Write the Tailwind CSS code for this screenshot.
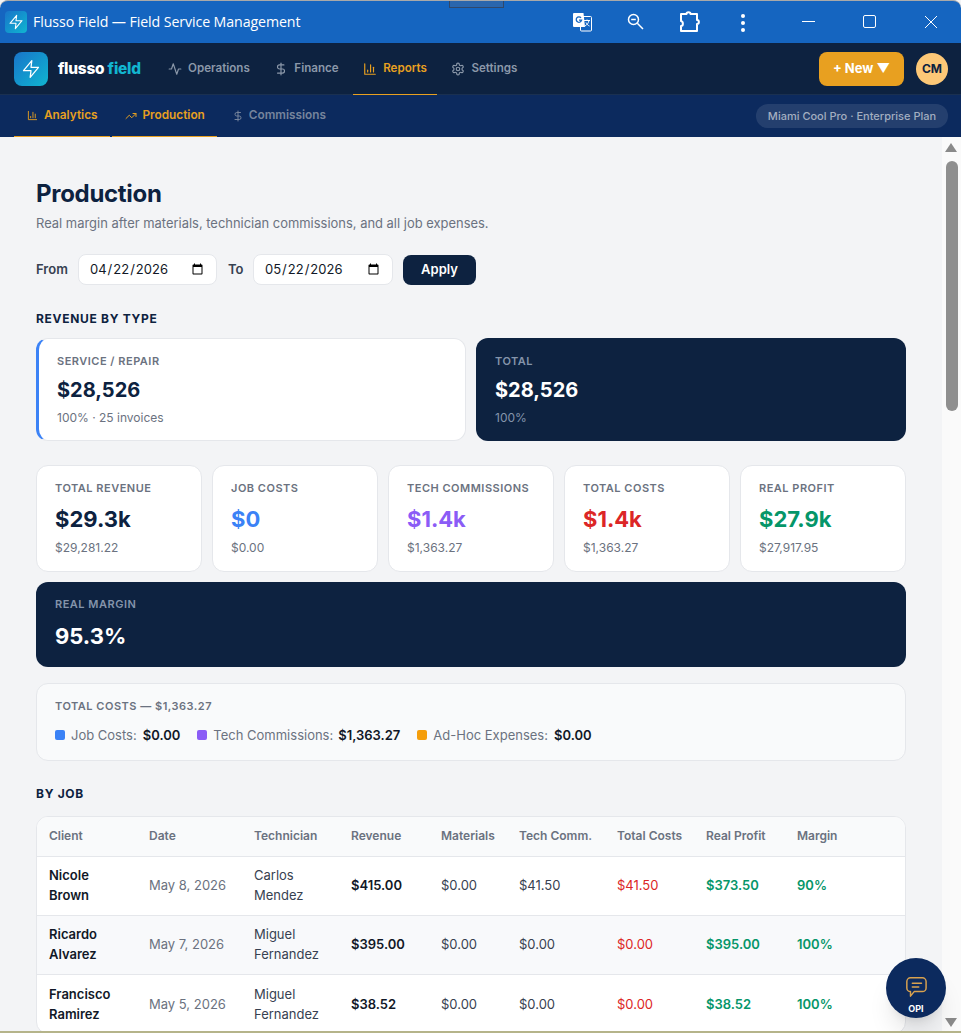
<!DOCTYPE html>
<html lang="en">
<head>
<meta charset="UTF-8">
<title>Flusso Field — Field Service Management</title>
<script src="https://cdn.jsdelivr.net/npm/@tailwindcss/browser@4"></script>
</head>
<body class="bg-[#f3f4f6] font-['Inter',sans-serif] overflow-hidden">
<div class="relative h-[1033px] w-[961px] overflow-hidden flex flex-col">

  <!-- Window title bar -->
  <div class="relative h-[43px] shrink-0 bg-[#1565c0] border-t border-[#a9a9a9] rounded-t-lg flex items-center">
    <div class="absolute left-[449px] top-0 w-[55px] h-[7px] border border-[#30486b] border-t-0 bg-[#2a66ad]"></div>
    <div class="ml-[5px] w-[22px] h-[22px] rounded bg-gradient-to-br from-[#1a74c9] to-[#12b5d0] flex items-center justify-center">
      <svg class="w-[16px] h-[16px]" viewBox="0 0 24 24" fill="none" stroke="#fff" stroke-width="1.6" stroke-linejoin="round"><polygon points="13 2 3 14 12 14 11 22 21 10 12 10 13 2"/></svg>
    </div>
    <span class="ml-[6px] text-white text-[14.2px] font-['Open_Sans',sans-serif] tracking-[-0.1px]">Flusso Field — Field Service Management</span>
    <!-- Browser icons -->
    <svg class="absolute left-[573px] top-[11px] w-[20px] h-[20px]" viewBox="0 0 20 20"><rect x="7.500" y="4.500" width="11" height="14.500" rx="1" fill="#1565c0" stroke="#fff"/><path d="M1 1h9.500l1.500 14H1a1 1 0 0 1-1-1V2a1 1 0 0 1 1-1z" fill="#fff"/><path d="M8 5.800a2.700 2.700 0 1 0 .6 2.400H6" fill="none" stroke="#1565c0" stroke-width="1.300"/><path d="M11 8.500h6M14 7.500v1M16 8.500c-.5 2.500-2 4.500-4 5.500M13 10.500c.7 1.500 2 3 3.500 3.500" fill="none" stroke="#fff" stroke-width="1"/></svg>
    <svg class="absolute left-[627px] top-[12px] w-[17px] h-[17px]" viewBox="0 0 17 17" fill="none" stroke="#fff" stroke-width="1.500"><circle cx="6.500" cy="6.500" r="5"/><path d="M4.200 6.500h4.600M10.300 10.300l5.700 5.700"/></svg>
    <svg class="absolute left-[679px] top-[10px] w-[22px] h-[22px]" viewBox="0 0 22 22" fill="none" stroke="#fff" stroke-width="2" stroke-linejoin="round"><path d="M2 3h5.500c0-2.500 4-2.500 4 0H18v6c2.500 0 2.500 4 0 4v7H2v-5c2.500 0 2.500-4.500 0-5z"/></svg>
    <svg class="absolute left-[739px] top-[12px] w-[8px] h-[20px]" viewBox="0 0 8 20" fill="#fff"><circle cx="4" cy="3" r="2"/><circle cx="4" cy="10" r="2"/><circle cx="4" cy="17" r="2"/></svg>
    <!-- Window controls -->
    <div class="absolute left-[802px] top-[20px] w-[13px] h-px bg-white"></div>
    <div class="absolute left-[863px] top-[14px] w-[13px] h-[13px] border border-white rounded-[2px]"></div>
    <svg class="absolute left-[924px] top-[14px] w-[14px] h-[14px]" viewBox="0 0 14 14" stroke="#fff" stroke-width="1"><path d="M1 1l12 12M13 1L1 13"/></svg>
  </div>

  <!-- Main nav -->
  <div class="h-[52px] shrink-0 bg-[#0d2240] border-b border-[#1a3050] flex items-center pl-[14px] pr-[13px]">
    <div class="w-[34px] h-[34px] rounded-lg bg-gradient-to-br from-[#1a74c9] to-[#12b5d0] flex items-center justify-center">
      <svg class="w-[20px] h-[20px]" viewBox="0 0 24 24" fill="none" stroke="#fff" stroke-width="1.500" stroke-linejoin="round"><polygon points="13 2 3 14 12 14 11 22 21 10 12 10 13 2"/></svg>
    </div>
    <div class="ml-[10px] text-[15.4px] font-extrabold tracking-[-0.2px] text-white w-[100px]">flusso <span class="text-[#12b5d0]">field</span></div>
    <nav class="flex gap-[4.5px] text-[11.6px] font-semibold text-[#8b98a9] h-[51px]">
      <a class="flex items-center gap-[6px] px-[10px]">
        <svg class="w-[14px] h-[14px]" viewBox="0 0 24 24" fill="none" stroke="currentColor" stroke-width="2" stroke-linecap="round" stroke-linejoin="round"><path d="M22 12h-4l-3 9L9 3l-3 9H2"/></svg>Operations</a>
      <a class="flex items-center gap-[6px] px-[10px]">
        <svg class="w-[14px] h-[14px]" viewBox="0 0 24 24" fill="none" stroke="currentColor" stroke-width="2" stroke-linecap="round" stroke-linejoin="round"><path d="M12 2v20"/><path d="M17 5H9.500a3.500 3.500 0 0 0 0 7h5a3.500 3.500 0 0 1 0 7H6"/></svg>Finance</a>
      <a class="relative flex items-center gap-[6px] px-[10px] text-[#e8a020]">
        <svg class="w-[14px] h-[14px]" viewBox="0 0 24 24" fill="none" stroke="currentColor" stroke-width="2" stroke-linecap="round" stroke-linejoin="round"><path d="M3 3v18h18"/><path d="M18 17V9"/><path d="M13 17V5"/><path d="M8 17v-3"/></svg>Reports<span class="absolute left-0 right-0 top-[51px] h-px bg-[#e8a020]"></span></a>
      <a class="flex items-center gap-[6px] px-[10px]">
        <svg class="w-[14px] h-[14px]" viewBox="0 0 24 24" fill="none" stroke="currentColor" stroke-width="2" stroke-linecap="round" stroke-linejoin="round"><path d="M12.220 2h-.44a2 2 0 0 0-2 2v.18a2 2 0 0 1-1 1.730l-.43.25a2 2 0 0 1-2 0l-.15-.08a2 2 0 0 0-2.730.73l-.22.38a2 2 0 0 0 .73 2.730l.15.1a2 2 0 0 1 1 1.720v.51a2 2 0 0 1-1 1.740l-.15.09a2 2 0 0 0-.73 2.730l.22.38a2 2 0 0 0 2.730.73l.15-.08a2 2 0 0 1 2 0l.43.25a2 2 0 0 1 1 1.730V20a2 2 0 0 0 2 2h.44a2 2 0 0 0 2-2v-.18a2 2 0 0 1 1-1.730l.43-.25a2 2 0 0 1 2 0l.15.08a2 2 0 0 0 2.730-.73l.22-.39a2 2 0 0 0-.73-2.730l-.15-.08a2 2 0 0 1-1-1.740v-.5a2 2 0 0 1 1-1.740l.15-.09a2 2 0 0 0 .73-2.730l-.22-.38a2 2 0 0 0-2.730-.73l-.15.08a2 2 0 0 1-2 0l-.43-.25a2 2 0 0 1-1-1.730V4a2 2 0 0 0-2-2z"/><circle cx="12" cy="12" r="3"/></svg>Settings</a>
    </nav>
    <button class="ml-auto w-[85px] h-[34px] rounded-lg bg-[#e8a020] text-white text-[13px] font-bold">+ New ▼</button>
    <div class="ml-[12px] w-[32px] h-[32px] rounded-full bg-[#fcc877] text-[#0d2240] text-[12px] font-bold flex items-center justify-center">CM</div>
  </div>

  <!-- Sub nav -->
  <div class="h-[42px] shrink-0 bg-[#0c2a5e] flex items-center pl-[14px] pr-[13px] text-[11.8px] font-semibold">
    <div class="flex gap-[2px] h-full text-[#e8a020]">
      <a class="flex items-center gap-[6px] pl-[13px] pr-[12px] border-b border-[#e8a020]">
        <svg class="w-[11px] h-[11px]" viewBox="0 0 24 24" fill="none" stroke="currentColor" stroke-width="2" stroke-linecap="round"><path d="M3 3v18h18"/><path d="M18 17V9"/><path d="M13 17V5"/><path d="M8 17v-3"/></svg>Analytics</a>
      <a class="flex items-center gap-[6px] pl-[13px] pr-[12px] border-b border-[#e8a020]">
        <svg class="w-[12px] h-[12px]" viewBox="0 0 24 24" fill="none" stroke="currentColor" stroke-width="2" stroke-linecap="round" stroke-linejoin="round"><polyline points="22 7 13.500 15.500 8.500 10.500 2 17"/><polyline points="16 7 22 7 22 13"/></svg>Production</a>
      <a class="flex items-center gap-[5px] pl-[13px] pr-[12px] border-b border-transparent text-[#76849c]">
        <svg class="w-[12px] h-[12px]" viewBox="0 0 24 24" fill="none" stroke="currentColor" stroke-width="2" stroke-linecap="round"><path d="M12 2v20"/><path d="M17 5H9.500a3.500 3.500 0 0 0 0 7h5a3.500 3.500 0 0 1 0 7H6"/></svg>Commissions</a>
    </div>
    <div class="ml-auto h-[24px] w-[192px] rounded-full bg-white/10 text-[#a3aec0] text-[11px] font-medium flex items-center justify-center">Miami Cool Pro · Enterprise Plan</div>
  </div>

  <!-- Scrolling body -->
  <div class="flex-1 flex min-h-0">
    <main class="w-[942px] shrink-0 pl-[36px] pr-[36px] pt-[43px] overflow-hidden">
      <h1 class="text-[24px] leading-[28px] font-bold text-[#0d2240] tracking-[-0.3px]">Production</h1>
      <p class="mt-[7px] text-[12.95px] leading-[16px] text-[#6b7280]">Real margin after materials, technician commissions, and all job expenses.</p>

      <form class="mt-[23px] flex items-center h-[31px] text-[13px]">
        <label class="font-semibold text-[#374151] w-[42px]">From</label>
        <input type="date" value="2026-04-22" class="w-[139px] h-[31px] px-[10px] bg-white border border-[#e5e7eb] rounded-lg text-[13px] text-[#111827]">
        <label class="ml-[11px] font-semibold text-[#374151] w-[25px]">To</label>
        <input type="date" value="2026-05-22" class="w-[140px] h-[31px] px-[10px] bg-white border border-[#e5e7eb] rounded-lg text-[13px] text-[#111827]">
        <button type="button" class="ml-[10px] w-[73px] h-[30px] rounded-lg bg-[#0d2240] text-white font-semibold">Apply</button>
      </form>

      <h2 class="mt-[26px] text-[12px] leading-[16px] font-bold tracking-[0.7px] text-[#0d2240]">REVENUE BY TYPE</h2>
      <section class="mt-[11px] grid grid-cols-2 gap-[10px]">
        <div class="h-[103px] bg-white border border-[#e5e7eb] border-l-[3px] border-l-[#3b82f6] rounded-xl pl-[18px] pt-[15px]">
          <div class="text-[11px] leading-[14px] font-semibold tracking-[0.5px] text-[#6b7280]">SERVICE / REPAIR</div>
          <div class="mt-[8px] text-[20px] leading-[28px] font-bold text-[#0d2240]">$28,526</div>
          <div class="mt-[6px] text-[12px] leading-[16px] text-[#6b7280]">100% · 25 invoices</div>
        </div>
        <div class="h-[103px] bg-[#0d2240] rounded-xl pl-[19px] pt-[16px]">
          <div class="text-[11px] leading-[14px] font-semibold tracking-[0.5px] text-[#8494ab]">TOTAL</div>
          <div class="mt-[8px] text-[20px] leading-[28px] font-bold text-white">$28,526</div>
          <div class="mt-[6px] text-[12px] leading-[16px] text-[#8494ab]">100%</div>
        </div>
      </section>

      <section class="mt-[24px] grid grid-cols-5 gap-[10px]">
        <div class="h-[107px] bg-white border border-[#e5e7eb] rounded-xl pl-[18px] pt-[15px]">
          <div class="text-[11px] leading-[14px] font-semibold tracking-[0.5px] text-[#6b7280]">TOTAL REVENUE</div>
          <div class="mt-[10px] text-[22px] leading-[28px] font-bold text-[#0d2240]">$29.3k</div>
          <div class="mt-[7px] text-[12px] leading-[16px] text-[#6b7280]">$29,281.22</div>
        </div>
        <div class="h-[107px] bg-white border border-[#e5e7eb] rounded-xl pl-[18px] pt-[15px]">
          <div class="text-[11px] leading-[14px] font-semibold tracking-[0.5px] text-[#6b7280]">JOB COSTS</div>
          <div class="mt-[10px] text-[22px] leading-[28px] font-bold text-[#3b82f6]">$0</div>
          <div class="mt-[7px] text-[12px] leading-[16px] text-[#6b7280]">$0.00</div>
        </div>
        <div class="h-[107px] bg-white border border-[#e5e7eb] rounded-xl pl-[18px] pt-[15px]">
          <div class="text-[11px] leading-[14px] font-semibold tracking-[0.5px] text-[#6b7280]">TECH COMMISSIONS</div>
          <div class="mt-[10px] text-[22px] leading-[28px] font-bold text-[#8b5cf6]">$1.4k</div>
          <div class="mt-[7px] text-[12px] leading-[16px] text-[#6b7280]">$1,363.27</div>
        </div>
        <div class="h-[107px] bg-white border border-[#e5e7eb] rounded-xl pl-[18px] pt-[15px]">
          <div class="text-[11px] leading-[14px] font-semibold tracking-[0.5px] text-[#6b7280]">TOTAL COSTS</div>
          <div class="mt-[10px] text-[22px] leading-[28px] font-bold text-[#dc2626]">$1.4k</div>
          <div class="mt-[7px] text-[12px] leading-[16px] text-[#6b7280]">$1,363.27</div>
        </div>
        <div class="h-[107px] bg-white border border-[#e5e7eb] rounded-xl pl-[18px] pt-[15px]">
          <div class="text-[11px] leading-[14px] font-semibold tracking-[0.5px] text-[#6b7280]">REAL PROFIT</div>
          <div class="mt-[10px] text-[22px] leading-[28px] font-bold text-[#059669]">$27.9k</div>
          <div class="mt-[7px] text-[12px] leading-[16px] text-[#6b7280]">$27,917.95</div>
        </div>
      </section>

      <section class="mt-[10px] h-[85px] bg-[#0d2240] rounded-xl pl-[19px] pt-[15px]">
        <div class="text-[11px] leading-[14px] font-semibold tracking-[0.5px] text-[#8494ab]">REAL MARGIN</div>
        <div class="mt-[11px] text-[22px] leading-[28px] font-bold text-white">95.3%</div>
      </section>

      <section class="mt-[16px] h-[78px] bg-[#f9fafb] border border-[#e5e7eb] rounded-xl pl-[18px] pt-[15px]">
        <div class="text-[11px] leading-[14px] font-semibold tracking-[0.5px] text-[#6b7280]">TOTAL COSTS — $1,363.27</div>
        <div class="mt-[13px] flex items-center text-[13px] leading-[18px] text-[#6b7280]">
          <i class="w-[10px] h-[10px] rounded-[2px] bg-[#3b82f6] mr-[6px]"></i>Job Costs:<b class="ml-[6px] font-semibold text-[#111827]">$0.00</b>
          <i class="ml-[17px] w-[10px] h-[10px] rounded-[2px] bg-[#8b5cf6] mr-[6px]"></i>Tech Commissions:<b class="ml-[5px] font-semibold text-[#111827]">$1,363.27</b>
          <i class="ml-[17px] w-[10px] h-[10px] rounded-[2px] bg-[#f59e0b] mr-[6px]"></i>Ad-Hoc Expenses:<b class="ml-[6px] font-semibold text-[#111827]">$0.00</b>
        </div>
      </section>

      <h2 class="mt-[25px] text-[12px] leading-[16px] font-bold tracking-[0.7px] text-[#0d2240]">BY JOB</h2>
      <div class="mt-[14px] bg-white border border-[#e5e7eb] rounded-xl overflow-hidden">
        <table class="w-full table-fixed text-[13px] leading-[19.5px] text-[#374151]">
          <colgroup><col class="w-[100px]"><col class="w-[105px]"><col class="w-[97px]"><col class="w-[90px]"><col class="w-[78px]"><col class="w-[98px]"><col class="w-[89px]"><col class="w-[91px]"><col></colgroup>
          <thead class="bg-[#f9fafb] text-[12px] text-[#6b7280] text-left">
            <tr class="h-[39px] border-b border-[#e5e7eb]">
              <th class="pl-[12px] pb-[2px] font-semibold">Client</th><th class="pl-[12px] pb-[2px] font-semibold">Date</th><th class="pl-[12px] pb-[2px] font-semibold">Technician</th><th class="pl-[12px] pb-[2px] font-semibold">Revenue</th><th class="pl-[12px] pb-[2px] font-semibold">Materials</th><th class="pl-[12px] pb-[2px] font-semibold">Tech Comm.</th><th class="pl-[12px] pb-[2px] font-semibold">Total Costs</th><th class="pl-[12px] pb-[2px] font-semibold">Real Profit</th><th class="pl-[12px] pb-[2px] font-semibold">Margin</th>
            </tr>
          </thead>
          <tbody>
            <tr class="h-[59px] border-b border-[#e5e7eb]">
              <td class="pl-[12px] pr-[12px] font-semibold text-[#111827]">Nicole Brown</td><td class="pl-[12px] text-[#6b7280]">May 8, 2026</td><td class="pl-[12px] pr-[12px]">Carlos Mendez</td><td class="pl-[12px] font-semibold text-[#111827]">$415.00</td><td class="pl-[12px]">$0.00</td><td class="pl-[12px]">$41.50</td><td class="pl-[12px] text-[#dc2626]">$41.50</td><td class="pl-[12px] font-semibold text-[#059669]">$373.50</td><td class="pl-[12px] font-semibold text-[#059669]">90%</td>
            </tr>
            <tr class="h-[59px] border-b border-[#e5e7eb] bg-[#f8f9fb]">
              <td class="pl-[12px] pr-[12px] font-semibold text-[#111827]">Ricardo Alvarez</td><td class="pl-[12px] text-[#6b7280]">May 7, 2026</td><td class="pl-[12px] pr-[12px]">Miguel Fernandez</td><td class="pl-[12px] font-semibold text-[#111827]">$395.00</td><td class="pl-[12px]">$0.00</td><td class="pl-[12px]">$0.00</td><td class="pl-[12px] text-[#dc2626]">$0.00</td><td class="pl-[12px] font-semibold text-[#059669]">$395.00</td><td class="pl-[12px] font-semibold text-[#059669]">100%</td>
            </tr>
            <tr class="h-[59px]">
              <td class="pl-[12px] pr-[12px] pt-[2px] font-semibold text-[#111827]">Francisco Ramirez</td><td class="pl-[12px] pt-[2px] text-[#6b7280]">May 5, 2026</td><td class="pl-[12px] pr-[12px] pt-[2px]">Miguel Fernandez</td><td class="pl-[12px] pt-[2px] font-semibold text-[#111827]">$38.52</td><td class="pl-[12px] pt-[2px]">$0.00</td><td class="pl-[12px] pt-[2px]">$0.00</td><td class="pl-[12px] pt-[2px] text-[#dc2626]">$0.00</td><td class="pl-[12px] pt-[2px] font-semibold text-[#059669]">$38.52</td><td class="pl-[12px] pt-[2px] font-semibold text-[#059669]">100%</td>
            </tr>
          </tbody>
        </table>
      </div>
    </main>

    <!-- Scrollbar -->
    <div class="relative flex-1 bg-[#fafafa]">
      <div class="absolute left-[3px] top-[6px] w-0 h-0 border-x-[6.5px] border-x-transparent border-b-[9px] border-b-[#8a8a8a]"></div>
      <div class="absolute left-[4px] top-[24px] w-[12px] h-[250px] rounded-full bg-[#8f8f8f]"></div>
      <div class="absolute left-[3px] bottom-[6px] w-0 h-0 border-x-[6.5px] border-x-transparent border-t-[9px] border-t-[#8a8a8a]"></div>
    </div>
  </div>

  <!-- Chat launcher -->
  <button class="absolute left-[886px] top-[958px] w-[60px] h-[60px] rounded-full bg-[#0c2a5e] shadow-xl flex flex-col items-center pt-[18px] text-white">
    <svg class="w-[22px] h-[22px]" viewBox="0 0 24 24" fill="none" stroke="#d9a24f" stroke-width="1.600" stroke-linejoin="round" stroke-linecap="round"><path d="M6 2h13a4 4 0 0 1 4 4v7a4 4 0 0 1-4 4H10l-4 5v-5a4 4 0 0 1-4-4V6a4 4 0 0 1 4-4z"/><path d="M8 8h10M8 12h7"/></svg>
    <span class="mt-[5px] text-[9px] leading-[12px] font-bold">OPI</span>
  </button>
  <div class="absolute left-0 bottom-0 w-full h-[2px] bg-[#b5b48a]"></div>
</div>
</body>
</html>
